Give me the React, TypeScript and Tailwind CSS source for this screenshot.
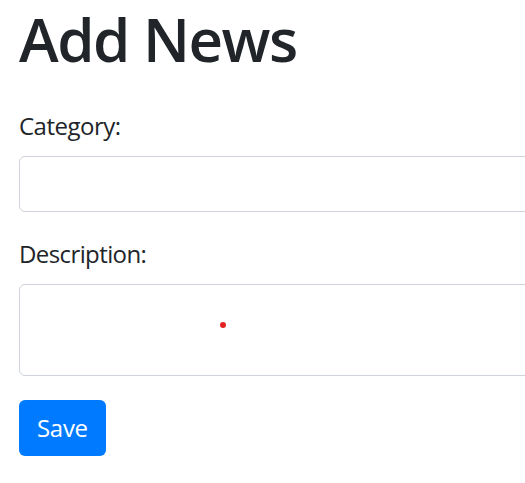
import React from 'react';

export default function App() {
  return (
    <div className="min-h-screen w-full overflow-hidden bg-white text-[#212529] font-['Open_Sans',sans-serif]">
      <div className="pl-[19px] pt-[3px]">
        <h1 className="m-0 text-[60px] leading-[72px] font-semibold tracking-[-1.5px]">Add News</h1>
        <form className="mt-[33px]" onSubmit={e => e.preventDefault()}>
          <div className="mb-[24px]">
            <label className="block text-[24px] leading-[36px] mb-[12px] tracking-[-0.5px]">Category:</label>
            <input
              type="text"
              className="block w-[600px] h-[56px] border border-[#ced4da] rounded-[6px] px-[18px] text-[24px] outline-none"
            />
          </div>
          <div className="mb-[24px]">
            <label className="block text-[24px] leading-[36px] mb-[12px] tracking-[-0.6px]">Description:</label>
            <div className="relative">
              <textarea className="block w-[600px] h-[92px] border border-[#ced4da] rounded-[6px] px-[18px] py-[9px] text-[24px] outline-none resize-none" />
              <span className="absolute left-[201px] top-[38px] w-[6px] h-[6px] rounded-full bg-[#e32222]" />
            </div>
          </div>
          <button
            type="submit"
            className="h-[56px] px-[18px] rounded-[6px] bg-[#007bff] text-white text-[24px] leading-[36px] tracking-[-0.3px]"
          >
            Save
          </button>
        </form>
      </div>
    </div>
  );
}
